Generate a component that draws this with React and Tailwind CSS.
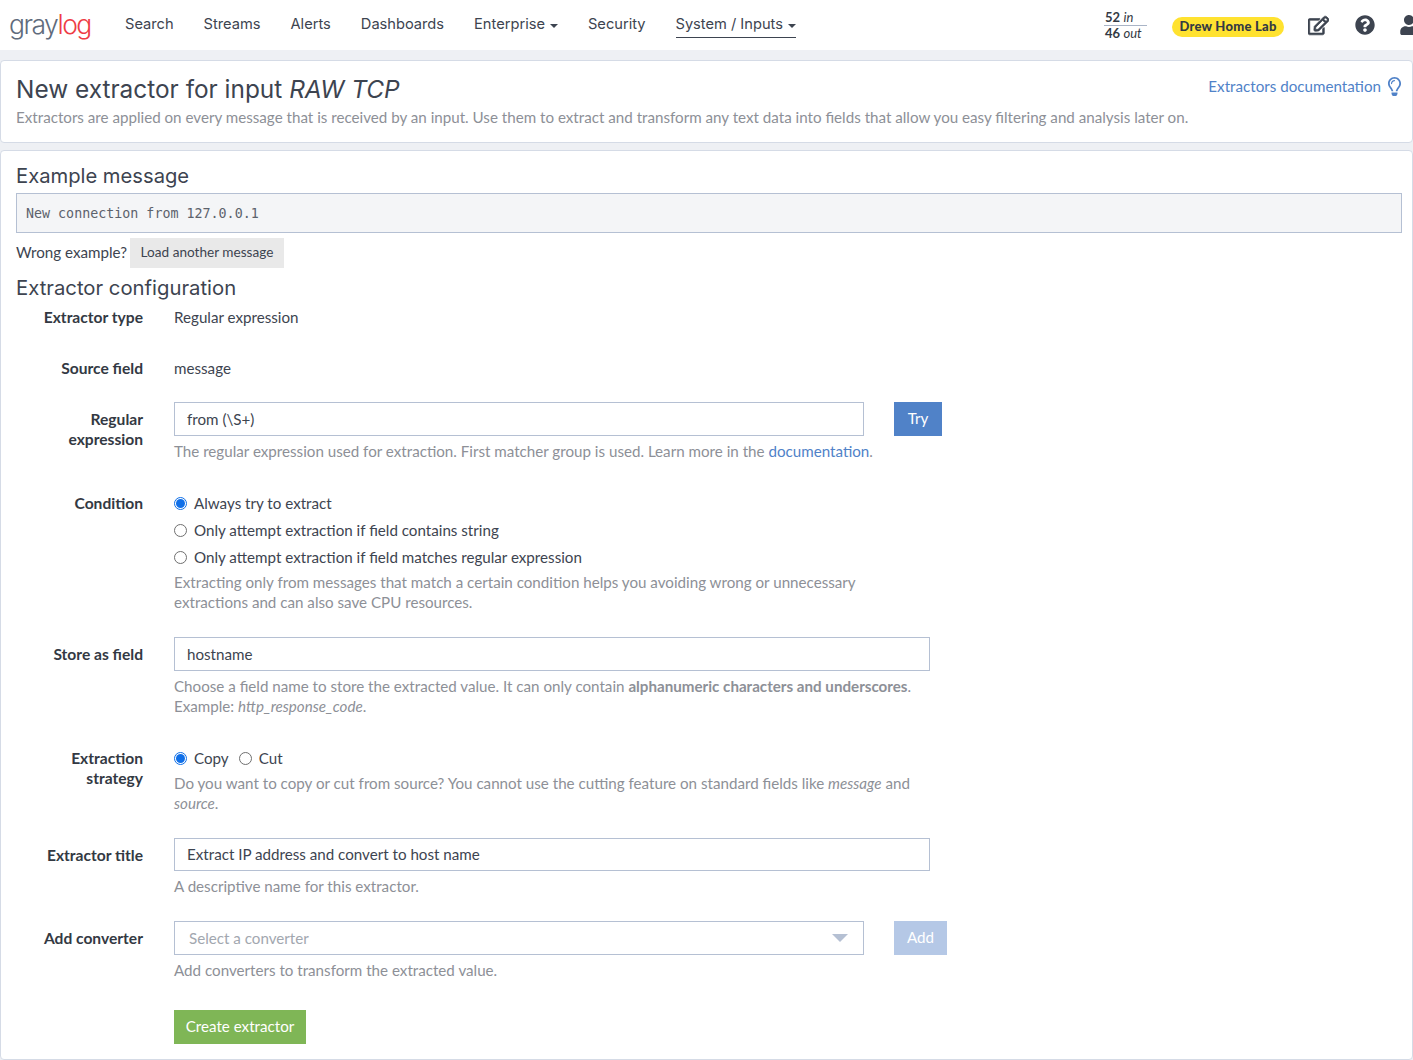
import { FaRegEdit, FaQuestionCircle, FaUser, FaRegLightbulb } from "react-icons/fa";

const navItems = [
    { name: "Search" },
    { name: "Streams" },
    { name: "Alerts" },
    { name: "Dashboards" },
    { name: "Enterprise", caret: true },
    { name: "Security" },
    { name: "System / Inputs", caret: true, active: true },
];

const Caret = () => (
    <span className="ml-[5px] mt-[2px] inline-block border-x-[4.5px] border-t-[4px] border-x-transparent border-t-[#3d4450]" />
);

const Radio = ({ checked }) => (
    <span
        className={
            checked
                ? "flex h-[13px] w-[13px] shrink-0 items-center justify-center rounded-full border border-[#0f6fe8] bg-white"
                : "flex h-[13px] w-[13px] shrink-0 rounded-full border border-[#6f6f6f] bg-white"
        }
    >
        {checked && <span className="h-[9px] w-[9px] rounded-full bg-[#0f6fe8]" />}
    </span>
);

const Help = ({ children, className = "" }) => (
    <p className={`text-[15.17px] leading-[20px] text-[#8d9097] ${className}`}>{children}</p>
);

// rows that start with an input sit their label one pixel lower
const Row = ({ label, children, className = "", inputRow = false }) => (
    <div className={`grid grid-cols-[127px_1fr] gap-x-[31px] ${className}`}>
        <div className={`${inputRow ? "pt-[7px]" : "pt-[6px]"} text-right text-[15.6px] font-bold leading-[20px] text-[#333943]`}>{label}</div>
        <div>{children}</div>
    </div>
);

const TextInput = ({ value, className = "" }) => (
    <div className={`flex items-center border border-[#b5c0d3] bg-white px-[12px] text-[15.17px] text-[#3d4450] ${className}`}>
        {value}
    </div>
);

const Header = () => (
    <nav className="flex h-[50px] items-center bg-white font-['Inter',sans-serif] text-[#3d4450]">
        <div className="ml-[9px] w-[116px] pb-[2px] font-['Inter',sans-serif] text-[26.5px] font-light leading-[50px] tracking-[-1.5px]">
            <span className="text-[#5f6b7c]">gray</span>
            <span className="text-[#ee3c45]">log</span>
        </div>
        <ul className="flex gap-[30px] text-[14.65px]">
            {navItems.map((item) => (
                <li
                    key={item.name}
                    className={
                        item.active
                            ? "flex h-[26px] items-center border-b border-[#3d4450]"
                            : "flex h-[26px] items-center"
                    }
                >
                    {item.name}
                    {item.caret && <Caret />}
                </li>
            ))}
        </ul>
        <div className="ml-auto flex items-center overflow-hidden">
            <div className="mr-[25px] w-[43px] font-['Lato',sans-serif] text-[13px] leading-[14px] text-[#333943]">
                <div className="border-b border-[#a9b4c6] pb-[1px] pl-[1px]">
                    <b>52</b> <i>in</i>
                </div>
                <div className="pl-[1px]">
                    <b>46</b> <i>out</i>
                </div>
            </div>
            <span className="mr-[24px] mt-[3px] flex h-[20px] w-[112px] items-center justify-center rounded-full bg-[#ffe230] font-['Lato',sans-serif] text-[13px] font-black tracking-[0.25px] text-[#333943]">
                Drew Home Lab
            </span>
            <FaRegEdit className="mr-[26px] stroke-current stroke-[18] text-[21px] text-[#3d4450]" />
            <FaQuestionCircle className="mr-[24px] text-[20px] text-[#3d4450]" />
            <FaUser className="mr-[-6px] text-[20px] text-[#3d4450]" />
        </div>
    </nav>
);

export default function App() {
    return (
        <div className="h-[1060px] overflow-hidden bg-[#eef0f4] font-['Lato',sans-serif] text-[#3d4450]">
            <Header />

            <section className="mt-[10px] flex h-[83px] justify-between rounded-[4px] border border-[#d5dbe6] bg-white pl-[15px] pr-[8px]">
                <div>
                    <h1 className="mt-[13px] font-['Inter',sans-serif] text-[24.4px] leading-[31px] text-[#3d4450]">
                        New extractor for input <em>RAW TCP</em>
                    </h1>
                    <p className="text-[15.17px] leading-[24px] text-[#8d9097]">
                        Extractors are applied on every message that is received by an input. Use them to extract and transform any text data into fields that allow you easy filtering and analysis later on.
                    </p>
                </div>
                <a className="mt-[14px] flex h-[22px] items-center gap-[4px] text-[15.17px] text-[#5082c8]">
                    Extractors documentation
                    <FaRegLightbulb className="text-[19px]" />
                </a>
            </section>

            <section className="mt-[7px] h-[910px] rounded-[4px] border border-[#d5dbe6] bg-white pl-[15px] pr-[10px]">
                <h2 className="mt-[12px] font-['Inter',sans-serif] text-[20.2px] leading-[26px]">Example message</h2>
                <div className="mt-[4px] flex h-[40px] items-center border border-[#b5c0d3] bg-[#f4f5f7] px-[9px] pt-[2px] font-['DejaVu_Sans_Mono',monospace] text-[13.33px] text-[#5c626c]">
                    New connection from 127.0.0.1
                </div>
                <div className="mt-[5px] flex items-center gap-[3px] text-[15.17px]">
                    <span className="pb-[2px]">Wrong example?</span>
                    <button className="h-[30px] w-[154px] bg-[#e9e9e9] pb-[2px] text-[13.6px] text-[#3d4450]">Load another message</button>
                </div>
                <h2 className="mt-[7px] font-['Inter',sans-serif] text-[20.3px] leading-[26px]">Extractor configuration</h2>

                <Row label="Extractor type">
                    <div className="pt-[6px] text-[15.17px] leading-[20px]">Regular expression</div>
                </Row>

                <Row label="Source field" className="mt-[25px]">
                    <div className="pt-[6px] text-[15.17px] leading-[20px]">message</div>
                </Row>

                <Row inputRow label={<>Regular<br />expression</>} className="mt-[24px]">
                    <div className="flex gap-[30px]">
                        <TextInput value="from (\S+)" className="h-[34px] w-[690px]" />
                        <button className="h-[34px] w-[48px] bg-[#5082c8] pb-[2px] text-[15.17px] text-white">Try</button>
                    </div>
                    <Help className="mt-[5px]">
                        The regular expression used for extraction. First matcher group is used. Learn more in the{" "}
                        <a className="text-[#5082c8]">documentation</a>.
                    </Help>
                </Row>

                <Row label="Condition" className="mt-[26px]">
                    <div className="flex flex-col gap-[7px] pt-[6px] text-[15.17px] leading-[20px]">
                        <label className="flex items-center gap-[7px]"><Radio checked />Always try to extract</label>
                        <label className="flex items-center gap-[7px]"><Radio />Only attempt extraction if field contains string</label>
                        <label className="flex items-center gap-[7px]"><Radio />Only attempt extraction if field matches regular expression</label>
                    </div>
                    <Help className="mt-[5px] w-[700px]">
                        Extracting only from messages that match a certain condition helps you avoiding wrong or unnecessary extractions and can also save CPU resources.
                    </Help>
                </Row>

                <Row inputRow label="Store as field" className="mt-[25px]">
                    <TextInput value="hostname" className="h-[34px] w-[756px]" />
                    <Help className="mt-[5px] w-[756px]">
                        Choose a field name to store the extracted value. It can only contain <b>alphanumeric characters and underscores</b>.
                        <br />
                        Example: <i>http_response_code</i>.
                    </Help>
                </Row>

                <Row label={<>Extraction<br />strategy</>} className="mt-[26px]">
                    <div className="flex items-center gap-[10px] pt-[6px] text-[15.17px] leading-[20px]">
                        <label className="flex items-center gap-[7px]"><Radio checked />Copy</label>
                        <label className="flex items-center gap-[7px]"><Radio />Cut</label>
                    </div>
                    <Help className="mt-[5px] w-[756px]">
                        Do you want to copy or cut from source? You cannot use the cutting feature on standard fields like <i>message</i> and <i>source</i>.
                    </Help>
                </Row>

                <Row inputRow label="Extractor title" className="mt-[25px]">
                    <TextInput value="Extract IP address and convert to host name" className="h-[33px] w-[756px]" />
                    <Help className="mt-[5px]">A descriptive name for this extractor.</Help>
                </Row>

                <Row inputRow label="Add converter" className="mt-[25px]">
                    <div className="flex gap-[30px]">
                        <div className="flex h-[34px] w-[690px] items-center justify-between border border-[#b5c0d3] bg-white pl-[14px] pr-[15px] text-[15.17px] text-[#a2a7af]">
                            Select a converter
                            <span className="border-x-[8px] border-t-[8px] border-x-transparent border-t-[#b5c0d3]" />
                        </div>
                        <button className="h-[34px] w-[53px] bg-[#b5c8e6] pb-[1px] text-[15.17px] text-white">Add</button>
                    </div>
                    <Help className="mt-[5px]">Add converters to transform the extracted value.</Help>
                    <button className="mt-[30px] h-[34px] w-[132px] bg-[#7fb656] pb-[2px] text-[15.17px] text-white">Create extractor</button>
                </Row>
            </section>
        </div>
    );
}
